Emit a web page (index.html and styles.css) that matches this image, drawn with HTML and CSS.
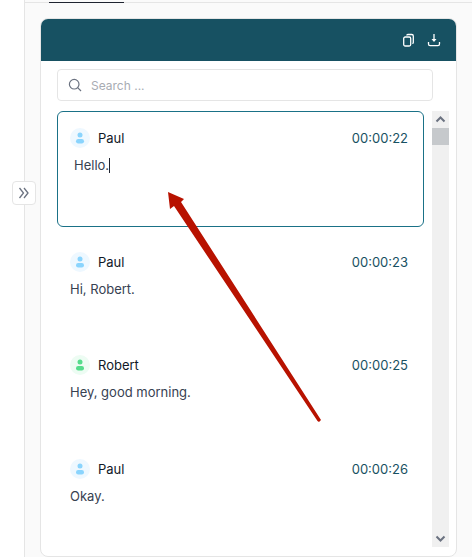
FILE: index.html
```html
<!DOCTYPE html>
<html lang="en">
    <head>
        <meta charset="UTF-8" />
        <title>Transcript</title>
        <link rel="stylesheet" href="styles.css">
    </head>
    <body>
        <div class="rail"></div>
        <button class="rail-toggle">
            <svg width="14" height="14" viewBox="0 0 14 14" fill="none" stroke="#6b7280" stroke-width="1.3"><path d="M2.500 2l4 5-4 5M7 2l4 5-4 5" /></svg>
        </button>

        <div class="main">
            <div class="tabs"><div class="tab-active"></div></div>

            <div class="card">
                <div class="card-header">
                    <svg width="14" height="14" viewBox="0 0 14 14" fill="none" stroke="#fff" stroke-width="1.3"><rect x="1.700" y="4" width="7" height="9" rx="1.500" /><path d="M4.800 2.600c0-.6.5-1.100 1.100-1.100h3.800c1 0 1.600.6 1.600 1.600v6.300c0 .6-.4 1-1 1" /></svg>
                    <svg width="14" height="14" viewBox="0 0 14 14" fill="none" stroke="#fff" stroke-width="1.300"><path d="M7 1v7" /><path d="M4.500 6h5L7 9z" fill="#fff" stroke="none" /><path d="M1.500 9v2c0 1 .6 1.600 1.600 1.600h7.800c1 0 1.600-.6 1.600-1.600V9" /></svg>
                </div>

                <div class="card-body">
                    <div class="search">
                        <svg width="14" height="14" viewBox="0 0 14 14" fill="none" stroke="#6b7280" stroke-width="1.2"><circle cx="6.200" cy="6.200" r="4.800" /><path d="M9.700 9.700L13 13" /></svg>
                        <span>Search ...</span>
                    </div>

                    <div class="content">
                        <div class="list">
                            <div class="item selected">
                                <div class="item-head">
                                    <span class="avatar blue">
                                        <svg width="10" height="12" viewBox="0 0 10 12"><circle cx="5" cy="3" r="2.500" /><rect x="1" y="7" width="8" height="4.500" rx="2.200" /></svg>
                                    </span>
                                    <span class="name">Paul</span>
                                    <span class="time">00:00:22</span>
                                </div>
                                <p class="line editing">Hello.<span class="caret"></span></p>
                            </div>

                            <div class="item">
                                <div class="item-head">
                                    <span class="avatar blue">
                                        <svg width="10" height="12" viewBox="0 0 10 12"><circle cx="5" cy="3" r="2.500" /><rect x="1" y="7" width="8" height="4.500" rx="2.200" /></svg>
                                    </span>
                                    <span class="name">Paul</span>
                                    <span class="time">00:00:23</span>
                                </div>
                                <p class="line">Hi, Robert.</p>
                            </div>

                            <div class="item">
                                <div class="item-head">
                                    <span class="avatar green">
                                        <svg width="10" height="12" viewBox="0 0 10 12"><circle cx="5" cy="3" r="2.500" /><rect x="1" y="7" width="8" height="4.500" rx="2.200" /></svg>
                                    </span>
                                    <span class="name">Robert</span>
                                    <span class="time">00:00:25</span>
                                </div>
                                <p class="line">Hey, good morning.</p>
                            </div>

                            <div class="item">
                                <div class="item-head">
                                    <span class="avatar blue">
                                        <svg width="10" height="12" viewBox="0 0 10 12"><circle cx="5" cy="3" r="2.500" /><rect x="1" y="7" width="8" height="4.500" rx="2.200" /></svg>
                                    </span>
                                    <span class="name">Paul</span>
                                    <span class="time">00:00:26</span>
                                </div>
                                <p class="line">Okay.</p>
                            </div>
                        </div>

                        <div class="scrollbar">
                            <svg width="17" height="17" viewBox="0 0 17 17" fill="none" stroke="#6b7280" stroke-width="2"><path d="M4.500 10.500l4-4 4 4" /></svg>
                            <div class="thumb"></div>
                            <div class="track"></div>
                            <svg width="17" height="17" viewBox="0 0 17 17" fill="none" stroke="#6b7280" stroke-width="2"><path d="M4.500 6.500l4 4 4-4" /></svg>
                        </div>
                    </div>
                </div>
            </div>
        </div>

        <svg class="arrow" width="472" height="557" viewBox="0 0 472 557">
            <path d="M168 192L184 199L181 202L321 420L319 422L317.500 421L174 206L170 209Z" fill="#b81200" />
        </svg>
    </body>
</html>
```

FILE: styles.css
```css
body {
    font-family: "Inter", "Noto Sans", sans-serif;
    margin: 0;
    padding: 0;
    height: 557px;
    overflow: hidden;
    display: flex;
    background-color: #fff;
    color: #1f2937;
}

.rail {
    width: 24px;
    flex: none;
    border-right: 1px solid #e5e5e5;
}

.rail-toggle {
    position: absolute;
    left: 12px;
    top: 181px;
    width: 24px;
    height: 24px;
    padding: 0;
    display: flex;
    align-items: center;
    justify-content: center;
    background-color: #fff;
    border: 1px solid #e5e5e5;
    border-radius: 4px;
}

.main {
    flex: 1;
    background-color: #fafafa;
    padding-top: 2px;
}

.tabs {
    height: 1px;
    background-color: #e5e5e5;
    padding-left: 24px;
}

.tab-active {
    width: 75px;
    height: 1px;
    background-color: #1f2430;
}

.card {
    margin: 15px 0 0 15px;
    width: 417px;
    height: 539px;
    box-sizing: border-box;
    background-color: #fff;
    border: 1px solid #e5e5e5;
    border-radius: 8px;
    overflow: hidden;
}

.card-header {
    height: 42px;
    background-color: #175162;
    display: flex;
    align-items: center;
    justify-content: flex-end;
    gap: 11px;
    padding-right: 15px;
}

.card-body {
    padding: 8px 8px 0 16px;
}

.search {
    width: 376px;
    height: 32px;
    box-sizing: border-box;
    border: 1px solid #e5e5e5;
    border-radius: 4px;
    display: flex;
    align-items: center;
    gap: 9px;
    padding-left: 10px;
    font-size: 12px;
    color: #a8acb3;
}

.content {
    display: flex;
    gap: 8px;
    margin-top: 10px;
}

.list {
    width: 367px;
    flex: none;
}

.item {
    padding: 17px 16px 0 13px;
    height: 103.500px;
    box-sizing: border-box;
}

.item.selected {
    height: 116px;
    margin-bottom: 7.750px;
    border: 1px solid #1a7187;
    border-radius: 6px;
    padding: 16px 15px 0 12px;
}

.item-head {
    display: flex;
    align-items: center;
    height: 20px;
}

.avatar {
    width: 20px;
    height: 20px;
    border-radius: 50%;
    display: flex;
    align-items: center;
    justify-content: center;
}

.avatar.blue {
    background-color: #eef8ff;
    fill: #8ad4fd;
}

.avatar.green {
    background-color: #edfcf3;
    fill: #55dc8b;
}

.name {
    margin-left: 8px;
    font-size: 13px;
    color: #111827;
}

.time {
    margin-left: auto;
    font-size: 13px;
    color: #175162;
}

.line {
    margin: 9px 0 0;
    font-size: 13px;
    line-height: 16px;
    color: #374151;
}

.line.editing {
    padding-left: 4px;
}

.caret {
    display: inline-block;
    width: 1px;
    height: 15px;
    vertical-align: -3px;
    background-color: #1f2430;
}

.scrollbar {
    width: 17px;
    height: 436px;
    flex: none;
    display: flex;
    flex-direction: column;
    background-color: #f0f0f0;
}

.thumb {
    height: 17px;
    flex: none;
    background-color: #c6c9cc;
}

.track {
    flex: 1;
}

.arrow {
    position: absolute;
    left: 0;
    top: 0;
    pointer-events: none;
}
```
